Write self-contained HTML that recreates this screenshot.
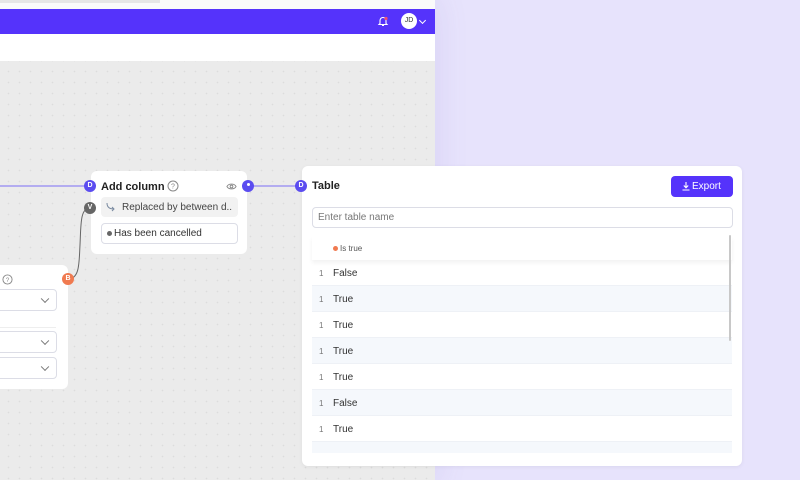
<!DOCTYPE html>
<html><head><meta charset="utf-8"><style>
*{box-sizing:border-box;margin:0;padding:0}
body{width:800px;height:480px;overflow:hidden;background:#e7e3fc;font-family:"Liberation Sans",sans-serif;position:relative;color:#222}
.app{position:absolute;left:0;top:0;width:435px;height:480px;background:#ebebeb;box-shadow:0 0 30px rgba(120,100,200,.15);
background-image:radial-gradient(circle,#dcdcdc 0.7px,transparent 0.9px);background-size:11px 11px;background-position:3px 66px}
.topstrip{position:absolute;left:0;top:0;width:435px;height:9px;background:#fafafa}
.topstrip div{position:absolute;left:0;top:0;width:160px;height:3px;background:#e6e6e6}
.bar{position:absolute;left:0;top:9px;width:435px;height:25px;background:#5533fb}
.tool{position:absolute;left:0;top:34px;width:435px;height:27px;background:#fff}
.card{position:absolute;background:#fff;border-radius:6px}
.dot{position:absolute;width:12px;height:12px;border-radius:50%;color:#fff;font-size:7px;text-align:center;line-height:12px;font-weight:bold}
.field{position:absolute;border:1px solid #dcdde6;border-radius:4px;background:#fff}
.chev{position:absolute;right:8px;top:50%;width:6px;height:6px;border-right:1.3px solid #777;border-bottom:1.3px solid #777;transform:translateY(-70%) rotate(45deg)}
.row{position:absolute;left:10px;width:420px;height:26px;font-size:10px;color:#333;line-height:27px;border-bottom:1px solid #eef1f6}
.row .n{position:absolute;left:7px;font-size:8px;color:#777}
.row .v{position:absolute;left:21px}
.alt{background:#f5f8fc}
</style></head><body>
<div class="app">
 <div class="topstrip"><div></div></div>
 <div class="bar">
  <svg style="position:absolute;left:377px;top:6px" width="12" height="12" viewBox="0 0 12 12"><path d="M3 8.5V5.5a3 3 0 0 1 6 0v3l1 1H2z M5 10.5h2" fill="none" stroke="#fff" stroke-width="1.1"/><circle cx="9" cy="3.5" r="1.6" fill="#f0506e"/></svg>
  <div style="position:absolute;left:401px;top:4px;width:16px;height:16px;border-radius:50%;background:#fff;color:#333;font-size:7px;text-align:center;line-height:16px">JD</div>
  <div style="position:absolute;left:420px;top:9px;width:5px;height:5px;border-right:1.2px solid #fff;border-bottom:1.2px solid #fff;transform:rotate(45deg)"></div>
 </div>
 <div class="tool"></div>
 <svg style="position:absolute;left:0;top:0" width="435" height="480">
  <line x1="0" y1="186" x2="90" y2="186" stroke="#7b6cf5" stroke-width="1"/>
  <line x1="248" y1="186" x2="300" y2="186" stroke="#7b6cf5" stroke-width="1"/>
  <path d="M68 279 C80 279 79 262 80 245 C81 225 80 208 90 208" fill="none" stroke="#666" stroke-width="1"/>
 </svg>
 <div class="card" style="left:-10px;top:265px;width:78px;height:124px">
  <svg style="position:absolute;left:12px;top:9px" width="11" height="11" viewBox="0 0 12 12"><circle cx="6" cy="6" r="5" fill="none" stroke="#888" stroke-width="1"/><text x="6" y="8.5" font-size="7" text-anchor="middle" fill="#888" font-family="Liberation Sans">?</text></svg>
  <div class="field" style="left:0;top:24px;width:67px;height:22px"><div class="chev"></div></div>
  <div style="position:absolute;left:0;top:62px;width:66px;height:1px;background:#eee"></div>
  <div class="field" style="left:0;top:66px;width:67px;height:22px"><div class="chev"></div></div>
  <div class="field" style="left:0;top:92px;width:67px;height:22px"><div class="chev"></div></div>
 </div>
 <div class="dot" style="left:62px;top:273px;background:#f07a50">B</div>
 <div class="card" style="left:91px;top:171px;width:156px;height:83px">
  <div style="position:absolute;left:10px;top:10px;font-size:11px;font-weight:bold;color:#222">Add column</div>
  <svg style="position:absolute;left:76px;top:9px" width="12" height="12" viewBox="0 0 12 12"><circle cx="6" cy="6" r="5" fill="none" stroke="#888" stroke-width="1"/><text x="6" y="8.5" font-size="7" text-anchor="middle" fill="#888" font-family="Liberation Sans">?</text></svg>
  <svg style="position:absolute;left:135px;top:11px" width="11" height="9" viewBox="0 0 12 9"><path d="M1 4.5C3 1 9 1 11 4.5C9 8 3 8 1 4.5z" fill="none" stroke="#888" stroke-width="1"/><circle cx="6" cy="4.5" r="1.5" fill="none" stroke="#888"/></svg>
  <div style="position:absolute;left:10px;top:26px;width:137px;height:20px;background:#f2f2f2;border-radius:4px;font-size:10px;color:#444;line-height:21px;padding-left:21px">Replaced by between d..</div>
  <svg style="position:absolute;left:15px;top:31px" width="10" height="10"><path d="M1 1C1 5 3 7 8 7M6 5l2 2-2 2" fill="none" stroke="#7a8aa0" stroke-width="1"/></svg>
  <div class="field" style="left:10px;top:52px;width:137px;height:21px;font-size:10px;color:#333;line-height:20px;padding-left:12px">Has been cancelled</div>
  <div style="position:absolute;left:16px;top:60px;width:5px;height:5px;border-radius:50%;background:#666"></div>
 </div>
 <div class="dot" style="left:84px;top:180px;background:#5b4cf0">D</div>
 <div class="dot" style="left:84px;top:202px;background:#666">V</div>
 <div class="dot" style="left:242px;top:180px;background:#5b4cf0"><span style="display:inline-block;width:3px;height:3px;background:#fff;border-radius:50%;vertical-align:middle;margin-top:-2px"></span></div>
</div>
<div class="card" style="left:302px;top:166px;width:440px;height:300px;box-shadow:0 1px 4px rgba(0,0,0,.06)">
 <div style="position:absolute;left:10px;top:14px;font-size:11px;font-weight:bold;color:#222">Table</div>
 <div style="position:absolute;left:369px;top:10px;width:62px;height:21px;background:#5533fb;border-radius:4px;color:#fff;font-size:10px;line-height:21px;padding-left:21px">Export</div>
 <svg style="position:absolute;left:380px;top:16px" width="8" height="9"><path d="M4 0v5.5M1.8 3.5L4 5.8 6.2 3.5M0.5 8h7" fill="none" stroke="#fff" stroke-width="1.1"/></svg>
 <div class="field" style="left:10px;top:41px;width:421px;height:21px;font-size:10px;color:#777;line-height:20px;padding-left:5px">Enter table name</div>
 <div style="position:absolute;left:10px;top:70px;width:420px;height:24px;box-shadow:0 3px 4px rgba(0,0,0,.05)">
  <div style="position:absolute;left:21px;top:10px;width:5px;height:5px;border-radius:50%;background:#f07a50"></div>
  <div style="position:absolute;left:28px;top:8px;font-size:8px;color:#555">Is true</div>
 </div>
 <div class="row" style="top:94px"><span class="n">1</span><span class="v">False</span></div>
 <div class="row alt" style="top:120px"><span class="n">1</span><span class="v">True</span></div>
 <div class="row" style="top:146px"><span class="n">1</span><span class="v">True</span></div>
 <div class="row alt" style="top:172px"><span class="n">1</span><span class="v">True</span></div>
 <div class="row" style="top:198px"><span class="n">1</span><span class="v">True</span></div>
 <div class="row alt" style="top:224px"><span class="n">1</span><span class="v">False</span></div>
 <div class="row" style="top:250px"><span class="n">1</span><span class="v">True</span></div>
 <div class="row alt" style="top:276px;height:11px;border:none"></div>
 <div style="position:absolute;left:427px;top:69px;width:2px;height:106px;background:#c8c8c8;border-radius:1px"></div>
 <div class="dot" style="left:-7px;top:14px;background:#5b4cf0">D</div>
</div>
</body></html>
